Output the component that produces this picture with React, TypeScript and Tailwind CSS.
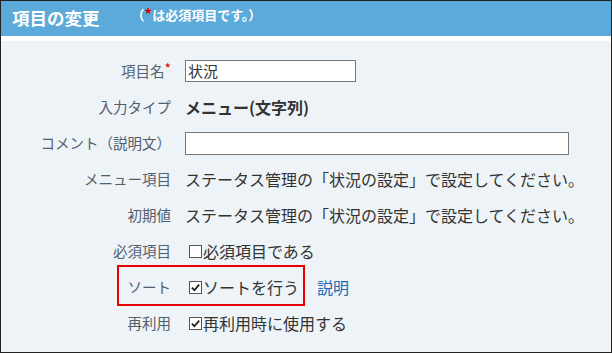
import type { ReactNode } from "react";

const Check = ({ checked }: { checked: boolean }) => (
  <span className="mr-[1px] inline-flex h-[13px] w-[13px] items-center justify-center border border-[#555] bg-white">
    {checked && (
      <svg viewBox="0 0 12 12" className="h-[11px] w-[11px]">
        <path d="M2 6.2 L4.8 9 L10 2.8" fill="none" stroke="#222" strokeWidth="2" />
      </svg>
    )}
  </span>
);

const Row = ({ label, children, required }: { label: string; children: ReactNode; required?: boolean }) => (
  <div className="flex h-[36px] items-center">
    <div className="w-[170px] shrink-0 text-right text-[14.5px] text-[#52606e]">
      {label}
      {required && <span className="relative top-[-3px] text-[14px] text-[#e00000]">*</span>}
    </div>
    <div className="ml-[14px] flex items-center text-[16px] text-[#333]">{children}</div>
  </div>
);

const App = () => {
  const status = "ステータス管理の「状況の設定」で設定してください。";

  return (
    <div
      className="h-[353px] w-[612px] overflow-hidden border border-[#222] bg-[#eef3f7]"
      style={{ fontFamily: '"Noto Sans CJK JP", "Noto Sans", sans-serif' }}
    >
      {/* ヘッダー */}
      <div className="flex h-[35px] items-start bg-[#5caad9] px-[11px] text-white">
        <span className="mt-[6px] text-[17.5px] font-bold leading-[22px]">項目の変更</span>
        <span className="ml-[32px] mt-[5px] text-[13px] font-bold leading-[16px]">
          （<span className="text-[15px] text-[#e00000]">*</span>は必須項目です。）
        </span>
      </div>
      <div className="h-[5px] bg-white" />

      <div className="pt-[12px]">
        <Row label="項目名" required>
          <input
            defaultValue="状況"
            className="h-[22px] w-[171px] border border-[#777] bg-white px-[2px] text-[15px] text-[#333] outline-none"
          />
        </Row>
        <Row label="入力タイプ">
          <span className="font-bold">メニュー(文字列)</span>
        </Row>
        <Row label="コメント（説明文）">
          <input className="h-[23px] w-[384px] border border-[#777] bg-white outline-none" />
        </Row>
        <Row label="メニュー項目">{status}</Row>
        <Row label="初期値">{status}</Row>
        <Row label="必須項目">
          <span className="ml-[4px] flex items-center">
            <Check checked={false} />
            必須項目である
          </span>
        </Row>
        <div className="relative">
          <Row label="ソート">
            <span className="ml-[4px] flex items-center">
              <Check checked />
              ソートを行う
            </span>
            <a className="ml-[18px] text-[#1a6db4]">説明</a>
          </Row>
          <div className="pointer-events-none absolute left-[116px] top-[-4px] h-[41px] w-[188px] border-2 border-[#e60000]" />
        </div>
        <Row label="再利用">
          <span className="ml-[4px] flex items-center">
            <Check checked />
            再利用時に使用する
          </span>
        </Row>
      </div>
    </div>
  );
};

export default App;
